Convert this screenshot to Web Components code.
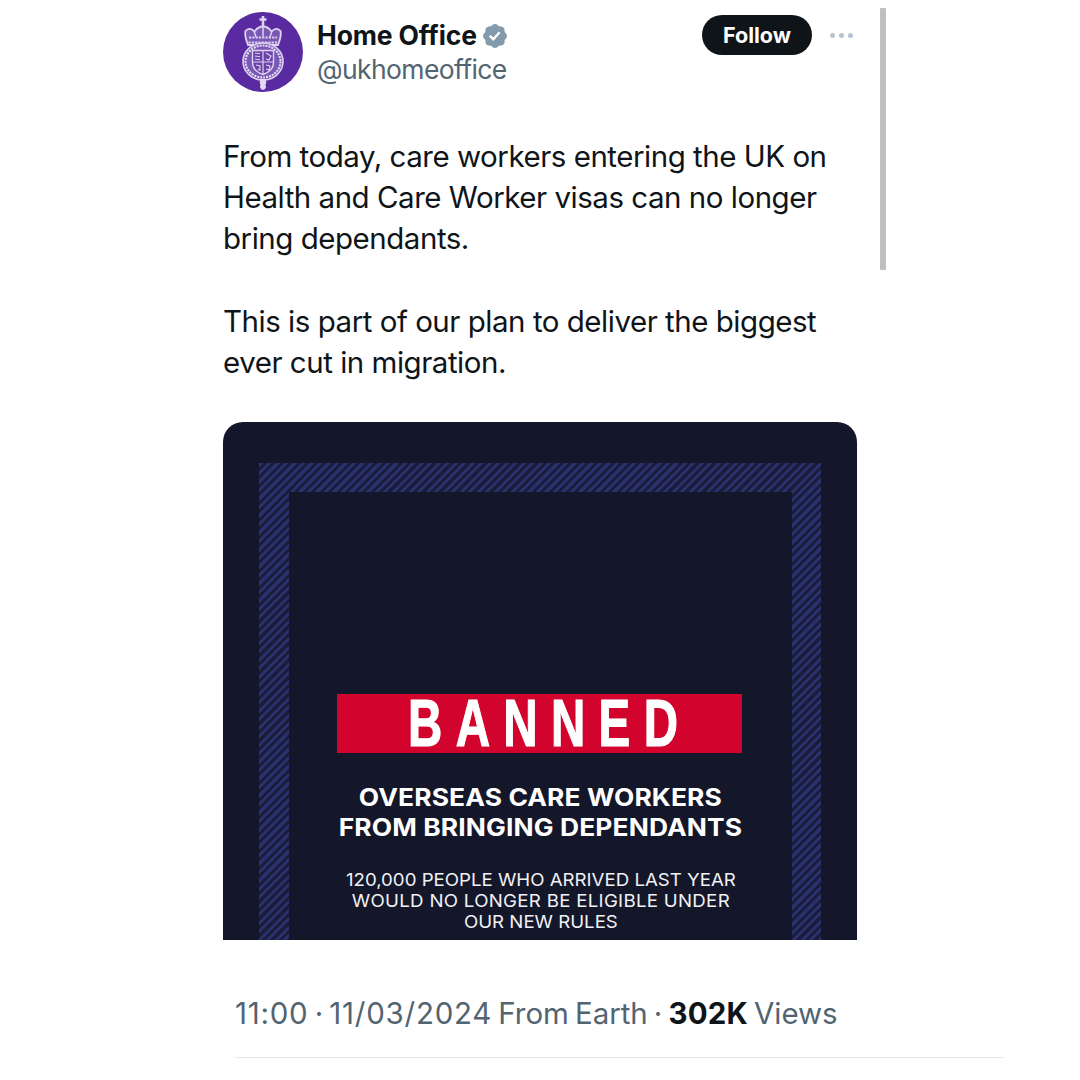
<!DOCTYPE html>
<html lang="en"><head><meta charset="utf-8"><title>Home Office</title>
<style>html,body{margin:0;background:#fff}body{font-family:Inter,"Liberation Sans",sans-serif}</style></head>
<body>
<tweet-page>
  <tweet-header name="Home Office" handle="@ukhomeoffice"></tweet-header>
  <tweet-text>
    <p>From today, care workers entering the UK on<br>Health and Care Worker visas can no longer<br>bring dependants.</p>
    <p>This is part of our plan to deliver the biggest<br>ever cut in migration.</p>
  </tweet-text>
  <tweet-media></tweet-media>
  <tweet-meta></tweet-meta>
</tweet-page>
<script>
function def(name, html){
  customElements.define(name, class extends HTMLElement{
    constructor(){super();this.attachShadow({mode:'open'}).innerHTML=html;}
    connectedCallback(){
      if(name==='tweet-header'){
        this.shadowRoot.querySelector('.name span').textContent=this.getAttribute('name');
        this.shadowRoot.querySelector('.handle').textContent=this.getAttribute('handle');
      }
    }
  });
}
def('tweet-page',`<style>
:host{display:block;width:1080px;height:1080px;overflow:hidden;position:relative;background:#fff;color:#0f1419;font-family:Inter,"Liberation Sans",sans-serif}
.col{display:flex;flex-direction:column;padding:12px 0 0 223px;box-sizing:border-box}
.bar{position:absolute;left:880px;top:8px;width:6px;height:262px;background:#bfbfbf;border-radius:1px}
</style><div class="col"><slot></slot></div><div class="bar"></div>`);

def('crest-mark',`<style>:host{display:block;width:80px;height:80px}svg{display:block}</style>
<svg width="80" height="80" viewBox="0 0 80 80" aria-hidden="true">
<circle cx="40" cy="40" r="40" fill="#5a2aa0"/>
<g fill="none" stroke="#ddd2ef" stroke-width="1.300">
<path d="M40 4v10M36.500 7.500h7" stroke-width="2.600"/>
<path d="M25 33c-2-5-3.500-10-2.500-14 2.500-3.500 6.500-2.500 9 .5C34 16 37 14.500 40 14.500s6 1.500 8.500 5c2.500-3 6.500-4 9-.5 1 4-.5 9-2.500 14z" fill="#7a58b6" stroke-width="1.800"/>
<path d="M26 25.500h28M25.500 30.500h29" stroke-width="1.800" stroke-dasharray="2.200 1.100"/>
<path d="M40 14.500v10M31 19l2 6M49 19l-2 6" stroke-width="1.500"/>
<ellipse cx="40" cy="49.500" rx="20" ry="18.500" fill="#7a58b6" stroke-width="1.600"/>
<ellipse cx="40" cy="49.500" rx="17.500" ry="16" stroke="#e8e1f4" stroke-dasharray="2 1" stroke-width="2"/>
<path d="M29.500 38.500h21v12c0 6-5 10-10.500 12-5.500-2-10.500-6-10.500-12z" fill="#6a43aa" stroke-width="1.400"/>
<path d="M40 38.500v24M29.500 50h21" stroke-width="1.200"/>
<path d="M32 41l5 .8M32 44l5 .8M32 47l5 .8M43 41l5 3-2 4-3-1M33 53l4 1 0 4-2-1M43 53l4 1-1 4-3-1" stroke-width="1.100"/>
</g>
<path d="M37.500 67h5l.8 3.500-.8 2.500a3 3 0 1 1-5 0l-.8-2.500z" fill="#e3d9f2"/>
</svg>`);

def('tweet-header',`<style>
:host{display:flex;align-items:flex-start;width:632px;height:80px;position:relative}
.who{margin-left:14px;display:flex;flex-direction:column}
.name{display:flex;align-items:center;gap:4px;font-weight:700;font-size:26.500px;line-height:34px;margin-top:6px;letter-spacing:-.15px}
.name svg{display:block;margin-top:1px}
.handle{font-size:26.500px;line-height:34px;color:#536471;letter-spacing:-.6px}
.right{margin-left:auto;display:flex;align-items:center;gap:18px;margin-top:3px}
.follow{width:110px;height:40px;border-radius:20px;background:#0f1419;color:#fff;font-weight:700;font-size:21.500px;display:flex;align-items:center;justify-content:center}
.more{display:flex;gap:4px;width:23px;margin-right:2px}
.more i{display:block;width:5px;height:5px;border-radius:50%;background:#b8c4d1}
</style>
<crest-mark></crest-mark>
<div class="who"><div class="name"><span></span>
<svg width="28" height="28" viewBox="0 0 22 22" aria-hidden="true"><path fill="#829aab" d="M20.396 11c-.018-.646-.215-1.275-.57-1.816-.354-.54-.852-.972-1.438-1.246.223-.607.27-1.264.14-1.897-.131-.634-.437-1.218-.882-1.687-.47-.445-1.053-.75-1.687-.882-.633-.13-1.29-.083-1.897.14-.273-.587-.704-1.086-1.245-1.44S11.647 1.62 11 1.604c-.646.017-1.273.213-1.813.568s-.969.854-1.24 1.44c-.608-.223-1.267-.272-1.902-.14-.635.13-1.22.436-1.69.882-.445.47-.749 1.055-.878 1.688-.13.633-.08 1.29.144 1.896-.587.274-1.087.705-1.443 1.245-.356.54-.555 1.17-.574 1.817.02.647.218 1.276.574 1.817.356.54.856.972 1.443 1.245-.224.606-.274 1.263-.144 1.896.13.634.433 1.218.877 1.688.47.443 1.054.747 1.687.878.633.132 1.29.084 1.897-.136.274.586.705 1.084 1.246 1.439.54.354 1.17.551 1.816.569.647-.016 1.276-.213 1.817-.567s.972-.854 1.245-1.44c.604.239 1.266.296 1.903.164.636-.132 1.22-.447 1.68-.907.46-.46.776-1.044.908-1.681s.075-1.299-.165-1.903c.586-.274 1.084-.705 1.439-1.246.354-.54.551-1.17.569-1.816z"/><path fill="#fff" d="M9.662 14.850l-3.429-3.428 1.293-1.302 2.072 2.072 4.400-4.794 1.347 1.246z"/></svg>
</div><div class="handle"></div></div>
<div class="right"><div class="follow">Follow</div><div class="more"><i></i><i></i><i></i></div></div>`);

def('tweet-text',`<style>
:host{display:block;margin-top:43.500px;font-size:29.500px;line-height:41.250px;color:#0f1419;letter-spacing:-.48px}
::slotted(p){margin:0 0 41.250px}
::slotted(p:last-child){margin-bottom:38.750px}
</style><slot></slot>`);

def('tweet-media',`<style>
:host{display:block;width:634px;height:518px;border-radius:20px 20px 0 0;background:#14172a;overflow:hidden;box-sizing:border-box;padding:41px 36px 0 36px}
.stripes{height:477px;box-sizing:border-box;padding:29px 29px 0 30px;background:repeating-linear-gradient(135deg,#2a2f6e 0 3px,#1a1d3a 3px 6px)}
.inner{height:100%;background:#14172a;display:flex;flex-direction:column;align-items:center;padding-top:202px;box-sizing:border-box;color:#fff;text-align:center}
.banned{width:405px;height:59px;margin-right:2px;background:#d2042d;display:flex;align-items:center;justify-content:center;box-sizing:border-box;flex:none}
.banned span{display:block;font:700 66px/59px "Liberation Sans",sans-serif;letter-spacing:18.500px;-webkit-text-stroke:1.200px #fff;transform:translateX(10px) scaleX(.72);white-space:nowrap}
h2{margin:30px 0 0;font-size:24px;line-height:30px;font-weight:700;white-space:nowrap;letter-spacing:.1px;transform:scaleX(1.1)}
p{margin:26px 0 0;font-size:17.500px;line-height:21px;font-weight:400;white-space:nowrap;color:#f1f1f4;transform:scaleX(1.066)}
p span{letter-spacing:.28px}
</style><div class="stripes"><div class="inner"><div class="banned"><span>BANNED</span></div>
<h2>OVERSEAS CARE WORKERS<br>FROM BRINGING DEPENDANTS</h2>
<p>120,000 PEOPLE WHO ARRIVED LAST YEAR<br><span>WOULD NO LONGER BE ELIGIBLE UNDER</span><br>OUR NEW RULES</p></div></div>`);

def('tweet-meta',`<style>
:host{display:block;width:769px;margin:53px 0 0 12px;font-size:29.500px;line-height:40px;color:#536471;white-space:nowrap;letter-spacing:-.07px;word-spacing:-2px}
b{color:#0f1419;font-weight:700;letter-spacing:.15px}
span{letter-spacing:.75px}
.rule{height:1px;background:#e6e8ea;margin-top:24px}
</style><div><span>11:00</span> · <span>11/03/2024</span> From Earth · <b>302K</b> Views</div><div class="rule"></div>`);
</script>
</body></html>
